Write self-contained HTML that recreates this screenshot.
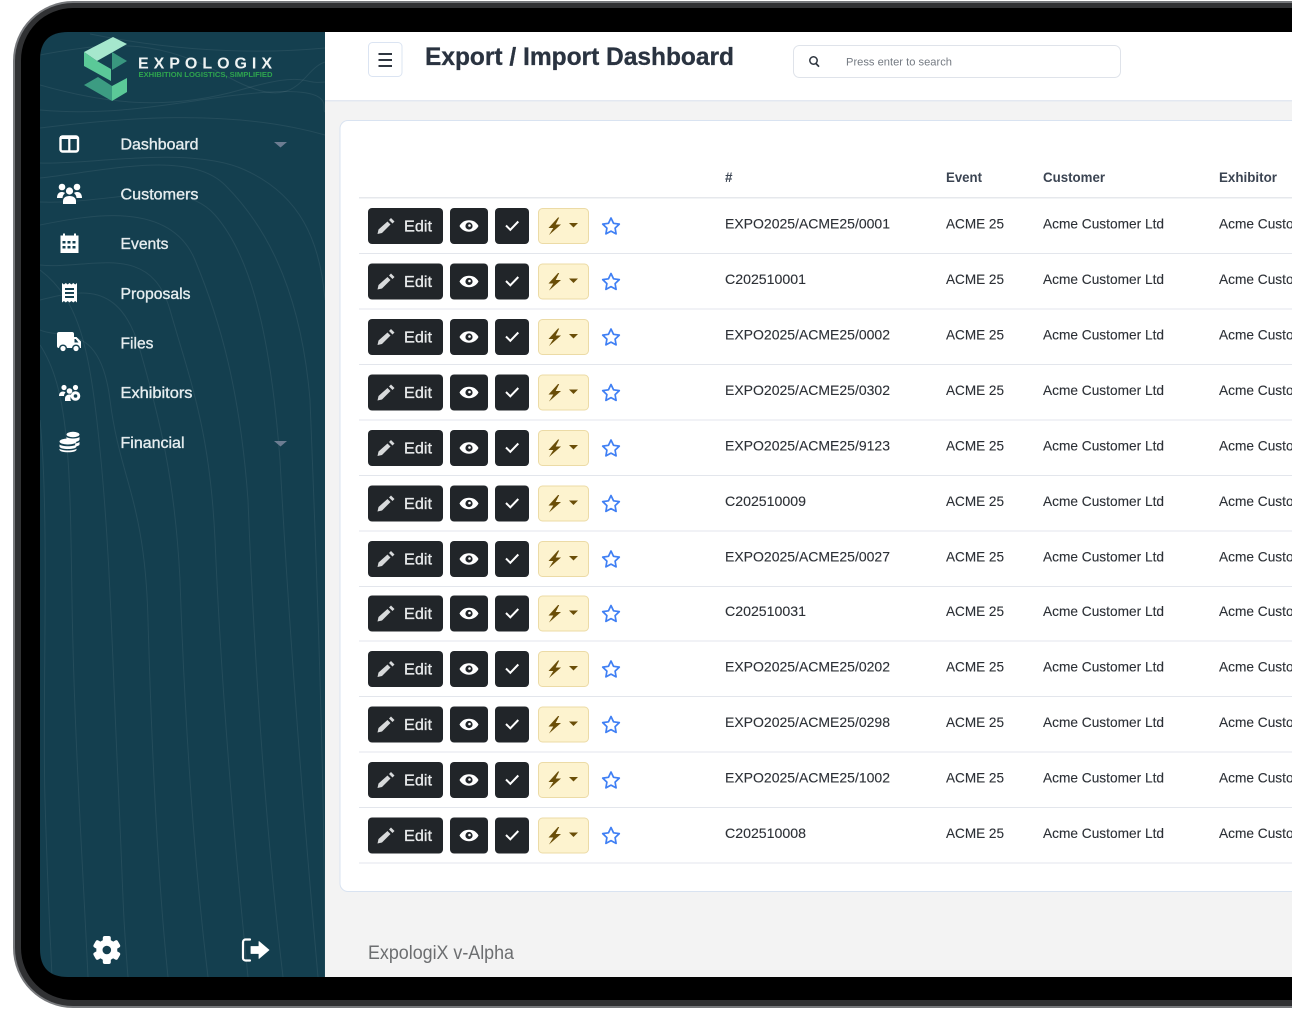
<!DOCTYPE html>
<html><head><meta charset="utf-8"><title>Export / Import Dashboard</title>
<style>
html,body{margin:0;padding:0;background:#fff;width:1292px;height:1012px;overflow:hidden}
svg{display:block;font-family:"Liberation Sans",sans-serif}
.c{font-size:14px;fill:#2c3036;stroke:#2c3036;stroke-width:.12}
.h{font-size:13.5px;font-weight:700;fill:#3b4452}
.m{font-size:16px;fill:#e6edef;stroke:#e6edef;stroke-width:.35}
.e{font-size:16px;fill:#e9ebec;stroke:#e9ebec;stroke-width:.3}
</style></head><body>
<svg width="1292" height="1012" viewBox="0 0 1292 1012">
<defs>
<clipPath id="sc"><path d="M68 32H1292V977H68Q40 977 40 949V60Q40 32 68 32Z"/></clipPath>
<g id="b">
  <rect x="368" y="-18" width="75" height="36" rx="4" fill="#212529"/>
  <rect x="450" y="-18" width="38" height="36" rx="4" fill="#212529"/>
  <rect x="495" y="-18" width="34" height="36" rx="4" fill="#212529"/>
  <rect x="538.500" y="-17.500" width="50" height="35" rx="4" fill="#fdf3cf" stroke="#ecdba6"/>
  <path d="M391-8l3.500 3.500-2 2-3.500-3.500zM387.500-4.500l3 3-8.500 8.500-4.500 1 1-4.500z" fill="#d8dadb"/>
  <path d="M459.500 0c2-3.800 5.500-5.700 9.500-5.700s7.500 1.900 9.500 5.700c-2 3.800-5.500 5.700-9.500 5.700S461.500 3.800 459.500 0z" fill="#fff"/>
  <circle cx="469" cy="0" r="3.600" fill="#212529"/><circle cx="469.500" cy="-.5" r="1.300" fill="#fff"/>
  <path d="M506 -.5l4.300 4.300 8-8.300" fill="none" stroke="#fff" stroke-width="2"/>
  <path d="M558-8.500l-9.500 10.500h4.800l-4.300 7 12-10.500h-5.300l3.500-7z" fill="#6a4e08"/>
  <path d="M569-3h9l-4.500 4.500z" fill="#6a4e08"/>
  <path d="M611-8l2.500 5.300 5.800.8-4.200 4 1 5.800-5.100-2.800-5.100 2.800 1-5.800-4.200-4 5.800-.8z" fill="none" stroke="#3f7ff4" stroke-width="1.700" stroke-linejoin="round"/>
</g>
<path id="caret" d="M274 142h13l-6.500 5.500z" fill="#6d7d92"/>
</defs>
<rect width="1292" height="1012" fill="#fff"/>
<rect x="13" y="1" width="1500" height="1007" rx="60" fill="#77797c"/>
<rect x="15" y="3" width="1500" height="1003" rx="58" fill="#303133"/>
<rect x="21" y="8" width="1500" height="992" rx="52" fill="#000"/>
<g clip-path="url(#sc)">
  <rect x="325" y="32" width="967" height="945" fill="#f3f3f3"/>
  <rect x="325" y="32" width="967" height="68" fill="#fff"/>
  <rect x="325" y="100" width="967" height="1.500" fill="#e3e8f1"/>
  <rect x="40" y="32" width="285" height="945" fill="#143f4f"/>
  <g fill="none" stroke="#fff" stroke-opacity=".07" stroke-width="1">
    <path d="M40 55C120 40 160 40 230 78S300 70 325 62"/>
    <path d="M90 34C170 50 250 55 325 48"/>
    <path d="M40 85C110 105 170 110 240 90S300 85 325 82"/>
    <path d="M40 110C130 118 200 96 270 92S320 110 325 112"/>
    <path d="M40 128C120 118 230 108 325 135"/>
    <path d="M40 163C90 165 190 145 245 170S320 240 325 300"/>
    <path d="M40 178C110 170 190 150 225 185S300 280 310 400C318 600 325 800 325 977"/>
    <path d="M40 202C110 205 180 175 215 215S270 330 280 460C290 650 305 830 318 977"/>
    <path d="M40 225C90 215 170 200 195 260S240 390 248 500C255 680 268 850 283 977"/>
    <path d="M40 265C90 270 150 240 170 310S210 430 215 540C222 700 235 850 248 977"/>
    <path d="M40 300C80 290 120 280 140 350S175 480 180 580C185 730 195 870 208 977"/>
    <path d="M40 330C60 340 100 320 110 400S145 500 148 620C152 760 158 880 168 977"/>
    <path d="M40 270C80 300 90 350 100 450S112 650 118 780 122 900 128 977"/>
    <path d="M40 345C70 390 70 470 72 600S82 850 88 977"/>
    <path d="M40 420C50 520 42 700 45 800S50 930 52 977"/>
  </g>
</g>

<!-- logo -->
<polygon points="113,37 127,44 97,61 84,52" fill="#a6e7cd"/>
<polygon points="84,52 97,61 111,69 111,81 84,66" fill="#5bc998"/>
<polygon points="112,52 127,61 112,70" fill="#39977f"/>
<polygon points="84,85 98,77 112,86 112,101" fill="#3c9c82"/>
<polygon points="112,101 127,92 127,78 112,86" fill="#5bc998"/>
<text x="138" y="68.500" font-size="16" font-weight="700" fill="#eef3f3" textLength="134" lengthAdjust="spacing">EXPOLOGIX</text>
<text x="138.500" y="77" font-size="7.500" font-weight="700" fill="#2ea44f" textLength="134" lengthAdjust="spacingAndGlyphs">EXHIBITION LOGISTICS, SIMPLIFIED</text>

<!-- menu -->
<text class="m" x="120.500" y="149.500" textLength="78" lengthAdjust="spacingAndGlyphs">Dashboard</text>
<text class="m" x="120.500" y="199.500" textLength="78" lengthAdjust="spacingAndGlyphs">Customers</text>
<text class="m" x="120.500" y="249" textLength="48" lengthAdjust="spacingAndGlyphs">Events</text>
<text class="m" x="120.500" y="299" textLength="70" lengthAdjust="spacingAndGlyphs">Proposals</text>
<text class="m" x="120.500" y="348.500" textLength="33" lengthAdjust="spacingAndGlyphs">Files</text>
<text class="m" x="120.500" y="398" textLength="72" lengthAdjust="spacingAndGlyphs">Exhibitors</text>
<text class="m" x="120.500" y="448" textLength="64" lengthAdjust="spacingAndGlyphs">Financial</text>
<use href="#caret"/><use href="#caret" y="299"/>

<!-- sidebar icons -->
<rect x="60.500" y="136.500" width="17.500" height="15" rx="2" fill="none" stroke="#fff" stroke-width="2.400"/>
<rect x="68.200" y="137" width="2.200" height="14" fill="#fff"/><rect x="60" y="136" width="18" height="3" fill="#fff"/>
<g fill="#fff">
  <circle cx="62" cy="187" r="3.300"/><circle cx="77" cy="187" r="3.300"/><circle cx="69.500" cy="191" r="3.600"/>
  <path d="M57 198c0-4 2-6 4.500-6s3.500 1 3.500 1c-1.500 1.500-2.500 3-2.500 5z"/><path d="M82 198c0-4-2-6-4.500-6s-3.500 1-3.500 1c1.500 1.500 2.500 3 2.500 5z"/>
  <path d="M63 204v-3c0-3 2.500-5 6.500-5s6.500 2 6.500 5v3z"/>
  <path fill-rule="evenodd" d="M63 233.500h2v2h9v-2h2v2h2.500v17.500h-18v-17.500h2.500zM62.500 241v2.500h3V241zM67.500 241v2.500h3V241zM72.500 241v2.500h3V241zM62.500 246v2.500h3V246zM67.500 246v2.500h3V246zM72.500 246v2.500h3V246z"/>
  <path fill-rule="evenodd" d="M62 283l1.900 1.500 1.900-1.500 1.900 1.500 1.800-1.500 1.900 1.500 1.900-1.500 1.900 1.500 1.800-1.500v19.500l-1.800-1.500-1.900 1.500-1.900-1.500-1.900 1.500-1.800-1.500-1.900 1.500-1.900-1.500-1.900 1.500zM65 288v2h9v-2zM65 292v2h9v-2zM65 296v2h9v-2z"/>
  <path fill-rule="evenodd" d="M59 332h13a2 2 0 0 1 2 2v3h2.500l4.500 4.500v6.500H59a2 2 0 0 1-2-2V334a2 2 0 0 1 2-2zM74.500 339v3.500h4l-2.800-3.500z"/>
</g>
<circle cx="63" cy="348.500" r="4" fill="#143f4f"/><circle cx="76" cy="348.500" r="4" fill="#143f4f"/>
<circle cx="63" cy="348.500" r="2.600" fill="#fff"/><circle cx="76" cy="348.500" r="2.600" fill="#fff"/>
<g fill="#fff">
  <circle cx="64" cy="387.500" r="2.600"/><circle cx="75.500" cy="387.500" r="2.600"/><circle cx="69.500" cy="391" r="2.800"/>
  <path d="M59 396c0-3 1.800-4.500 4-4.500 1 0 2 .4 2.500 1-1 .9-1.500 2-1.500 3.500zM65 401v-2.500c0-2.400 2-4 4.500-4 1 0 2 .3 2.500.7-1.500 1.300-2 3.800-1 5.800z"/>
  <circle cx="75.500" cy="396" r="4.800"/>
</g>
<circle cx="75.500" cy="396" r="1.800" fill="#143f4f"/>
<g fill="#fff">
  <ellipse cx="73" cy="434.500" rx="6.500" ry="2.700"/><path d="M66.500 437c2 2 11 2 13 0v2.500c0 1.500-3 2.500-6.500 2.500s-6.500-1-6.500-2.500z"/>
  <path d="M75 443.500c2-.2 3.500-.7 4.500-1.500v2.500c0 .8-1.500 1.500-4 2z"/>
  <ellipse cx="68" cy="441.500" rx="8.500" ry="3"/>
  <path d="M59.500 444.500c2.500 2.300 14.500 2.300 17 0v2c0 1.500-3.800 2.500-8.500 2.500s-8.500-1-8.500-2.500z"/>
  <path d="M59.500 448.800c2.500 2.300 14.500 2.300 17 0v1c0 1.500-3.800 2.500-8.500 2.500s-8.500-1-8.500-2.500z"/>
</g>

<!-- gear, logout -->
<g fill="#fff" transform="translate(106.800,950)">
  <circle r="10.500"/>
  <rect x="-4" y="-14" width="8" height="28" rx="2"/>
  <rect x="-4" y="-14" width="8" height="28" rx="2" transform="rotate(60)"/>
  <rect x="-4" y="-14" width="8" height="28" rx="2" transform="rotate(120)"/>
</g>
<circle cx="106.800" cy="950" r="4.300" fill="#143f4f"/>
<path d="M250 939.500h-4.500a2.500 2.500 0 0 0-2.500 2.500v16a2.500 2.500 0 0 0 2.500 2.500h4.500" fill="none" stroke="#fff" stroke-width="2.200" stroke-linecap="round"/>
<path d="M251 946.500h8v-5l10 8.500-10 8.500v-5h-8z" fill="#fff" stroke="#fff" stroke-width=".8" stroke-linejoin="round"/>

<!-- header -->
<rect x="368.500" y="42.500" width="33.500" height="34" rx="4" fill="#fff" stroke="#dbe4f2"/>
<path d="M378.500 54h13.500M378.500 60h13.500M378.500 66h13.500" stroke="#2f3640" stroke-width="2"/>
<text x="425" y="65" font-size="25" font-weight="700" fill="#2a3340" stroke="#2a3340" stroke-width=".3" textLength="309" lengthAdjust="spacingAndGlyphs">Export / Import Dashboard</text>
<rect x="793.500" y="45.500" width="327" height="32" rx="6" fill="#fff" stroke="#dfe3ea"/>
<circle cx="813.500" cy="60.500" r="3.700" fill="none" stroke="#2f3640" stroke-width="1.500"/><path d="M816 63.500l3 3.200" stroke="#2f3640" stroke-width="1.700"/>
<text x="846" y="65.500" font-size="11" fill="#747a82" textLength="106" lengthAdjust="spacingAndGlyphs">Press enter to search</text>

<!-- card -->
<path d="M1293 120.500H348a8 8 0 0 0-8 8V883.500a8 8 0 0 0 8 8H1293" fill="#fff" stroke="#d9e3f1"/>
<text x="725" y="182" class="h">#</text>
<text x="946" y="182" class="h" textLength="36" lengthAdjust="spacingAndGlyphs">Event</text>
<text x="1043" y="182" class="h" textLength="62" lengthAdjust="spacingAndGlyphs">Customer</text>
<text x="1219" y="182" class="h" textLength="58" lengthAdjust="spacingAndGlyphs">Exhibitor</text>
<rect x="359" y="197" width="933" height="1.500" fill="#e6e8ec"/>
<g fill="#e3e6ec">
<rect x="359" y="253" width="933" height="1"/><rect x="359" y="308.500" width="933" height="1"/><rect x="359" y="364" width="933" height="1"/><rect x="359" y="419.500" width="933" height="1"/><rect x="359" y="475" width="933" height="1"/><rect x="359" y="530.500" width="933" height="1"/><rect x="359" y="586" width="933" height="1"/><rect x="359" y="640.500" width="933" height="1"/><rect x="359" y="696" width="933" height="1"/><rect x="359" y="751.500" width="933" height="1"/><rect x="359" y="807" width="933" height="1"/><rect x="359" y="862.500" width="933" height="1"/>
</g>

<!-- rows -->
<g transform="translate(0,226)"><use href="#b"/><text class="e" x="404" y="5.500" textLength="28" lengthAdjust="spacingAndGlyphs">Edit</text><text class="c" x="725" y="2.500" textLength="165" lengthAdjust="spacingAndGlyphs">EXPO2025/ACME25/0001</text><text class="c" x="946" y="2.500" textLength="58" lengthAdjust="spacingAndGlyphs">ACME 25</text><text class="c" x="1043" y="2.500" textLength="121" lengthAdjust="spacingAndGlyphs">Acme Customer Ltd</text><text class="c" x="1219" y="2.500" textLength="121" lengthAdjust="spacingAndGlyphs">Acme Customer Ltd</text></g>
<g transform="translate(0,281.500)"><use href="#b"/><text class="e" x="404" y="5.500" textLength="28" lengthAdjust="spacingAndGlyphs">Edit</text><text class="c" x="725" y="2.500" textLength="81" lengthAdjust="spacingAndGlyphs">C202510001</text><text class="c" x="946" y="2.500" textLength="58" lengthAdjust="spacingAndGlyphs">ACME 25</text><text class="c" x="1043" y="2.500" textLength="121" lengthAdjust="spacingAndGlyphs">Acme Customer Ltd</text><text class="c" x="1219" y="2.500" textLength="121" lengthAdjust="spacingAndGlyphs">Acme Customer Ltd</text></g>
<g transform="translate(0,337)"><use href="#b"/><text class="e" x="404" y="5.500" textLength="28" lengthAdjust="spacingAndGlyphs">Edit</text><text class="c" x="725" y="2.500" textLength="165" lengthAdjust="spacingAndGlyphs">EXPO2025/ACME25/0002</text><text class="c" x="946" y="2.500" textLength="58" lengthAdjust="spacingAndGlyphs">ACME 25</text><text class="c" x="1043" y="2.500" textLength="121" lengthAdjust="spacingAndGlyphs">Acme Customer Ltd</text><text class="c" x="1219" y="2.500" textLength="121" lengthAdjust="spacingAndGlyphs">Acme Customer Ltd</text></g>
<g transform="translate(0,392.500)"><use href="#b"/><text class="e" x="404" y="5.500" textLength="28" lengthAdjust="spacingAndGlyphs">Edit</text><text class="c" x="725" y="2.500" textLength="165" lengthAdjust="spacingAndGlyphs">EXPO2025/ACME25/0302</text><text class="c" x="946" y="2.500" textLength="58" lengthAdjust="spacingAndGlyphs">ACME 25</text><text class="c" x="1043" y="2.500" textLength="121" lengthAdjust="spacingAndGlyphs">Acme Customer Ltd</text><text class="c" x="1219" y="2.500" textLength="121" lengthAdjust="spacingAndGlyphs">Acme Customer Ltd</text></g>
<g transform="translate(0,448)"><use href="#b"/><text class="e" x="404" y="5.500" textLength="28" lengthAdjust="spacingAndGlyphs">Edit</text><text class="c" x="725" y="2.500" textLength="165" lengthAdjust="spacingAndGlyphs">EXPO2025/ACME25/9123</text><text class="c" x="946" y="2.500" textLength="58" lengthAdjust="spacingAndGlyphs">ACME 25</text><text class="c" x="1043" y="2.500" textLength="121" lengthAdjust="spacingAndGlyphs">Acme Customer Ltd</text><text class="c" x="1219" y="2.500" textLength="121" lengthAdjust="spacingAndGlyphs">Acme Customer Ltd</text></g>
<g transform="translate(0,503.500)"><use href="#b"/><text class="e" x="404" y="5.500" textLength="28" lengthAdjust="spacingAndGlyphs">Edit</text><text class="c" x="725" y="2.500" textLength="81" lengthAdjust="spacingAndGlyphs">C202510009</text><text class="c" x="946" y="2.500" textLength="58" lengthAdjust="spacingAndGlyphs">ACME 25</text><text class="c" x="1043" y="2.500" textLength="121" lengthAdjust="spacingAndGlyphs">Acme Customer Ltd</text><text class="c" x="1219" y="2.500" textLength="121" lengthAdjust="spacingAndGlyphs">Acme Customer Ltd</text></g>
<g transform="translate(0,559)"><use href="#b"/><text class="e" x="404" y="5.500" textLength="28" lengthAdjust="spacingAndGlyphs">Edit</text><text class="c" x="725" y="2.500" textLength="165" lengthAdjust="spacingAndGlyphs">EXPO2025/ACME25/0027</text><text class="c" x="946" y="2.500" textLength="58" lengthAdjust="spacingAndGlyphs">ACME 25</text><text class="c" x="1043" y="2.500" textLength="121" lengthAdjust="spacingAndGlyphs">Acme Customer Ltd</text><text class="c" x="1219" y="2.500" textLength="121" lengthAdjust="spacingAndGlyphs">Acme Customer Ltd</text></g>
<g transform="translate(0,613.500)"><use href="#b"/><text class="e" x="404" y="5.500" textLength="28" lengthAdjust="spacingAndGlyphs">Edit</text><text class="c" x="725" y="2.500" textLength="81" lengthAdjust="spacingAndGlyphs">C202510031</text><text class="c" x="946" y="2.500" textLength="58" lengthAdjust="spacingAndGlyphs">ACME 25</text><text class="c" x="1043" y="2.500" textLength="121" lengthAdjust="spacingAndGlyphs">Acme Customer Ltd</text><text class="c" x="1219" y="2.500" textLength="121" lengthAdjust="spacingAndGlyphs">Acme Customer Ltd</text></g>
<g transform="translate(0,669)"><use href="#b"/><text class="e" x="404" y="5.500" textLength="28" lengthAdjust="spacingAndGlyphs">Edit</text><text class="c" x="725" y="2.500" textLength="165" lengthAdjust="spacingAndGlyphs">EXPO2025/ACME25/0202</text><text class="c" x="946" y="2.500" textLength="58" lengthAdjust="spacingAndGlyphs">ACME 25</text><text class="c" x="1043" y="2.500" textLength="121" lengthAdjust="spacingAndGlyphs">Acme Customer Ltd</text><text class="c" x="1219" y="2.500" textLength="121" lengthAdjust="spacingAndGlyphs">Acme Customer Ltd</text></g>
<g transform="translate(0,724.500)"><use href="#b"/><text class="e" x="404" y="5.500" textLength="28" lengthAdjust="spacingAndGlyphs">Edit</text><text class="c" x="725" y="2.500" textLength="165" lengthAdjust="spacingAndGlyphs">EXPO2025/ACME25/0298</text><text class="c" x="946" y="2.500" textLength="58" lengthAdjust="spacingAndGlyphs">ACME 25</text><text class="c" x="1043" y="2.500" textLength="121" lengthAdjust="spacingAndGlyphs">Acme Customer Ltd</text><text class="c" x="1219" y="2.500" textLength="121" lengthAdjust="spacingAndGlyphs">Acme Customer Ltd</text></g>
<g transform="translate(0,780)"><use href="#b"/><text class="e" x="404" y="5.500" textLength="28" lengthAdjust="spacingAndGlyphs">Edit</text><text class="c" x="725" y="2.500" textLength="165" lengthAdjust="spacingAndGlyphs">EXPO2025/ACME25/1002</text><text class="c" x="946" y="2.500" textLength="58" lengthAdjust="spacingAndGlyphs">ACME 25</text><text class="c" x="1043" y="2.500" textLength="121" lengthAdjust="spacingAndGlyphs">Acme Customer Ltd</text><text class="c" x="1219" y="2.500" textLength="121" lengthAdjust="spacingAndGlyphs">Acme Customer Ltd</text></g>
<g transform="translate(0,835.500)"><use href="#b"/><text class="e" x="404" y="5.500" textLength="28" lengthAdjust="spacingAndGlyphs">Edit</text><text class="c" x="725" y="2.500" textLength="81" lengthAdjust="spacingAndGlyphs">C202510008</text><text class="c" x="946" y="2.500" textLength="58" lengthAdjust="spacingAndGlyphs">ACME 25</text><text class="c" x="1043" y="2.500" textLength="121" lengthAdjust="spacingAndGlyphs">Acme Customer Ltd</text><text class="c" x="1219" y="2.500" textLength="121" lengthAdjust="spacingAndGlyphs">Acme Customer Ltd</text></g>

<text x="368" y="959" font-size="19" fill="#6c6e70" textLength="146" lengthAdjust="spacingAndGlyphs">ExpologiX v-Alpha</text>
</svg>
</body></html>
